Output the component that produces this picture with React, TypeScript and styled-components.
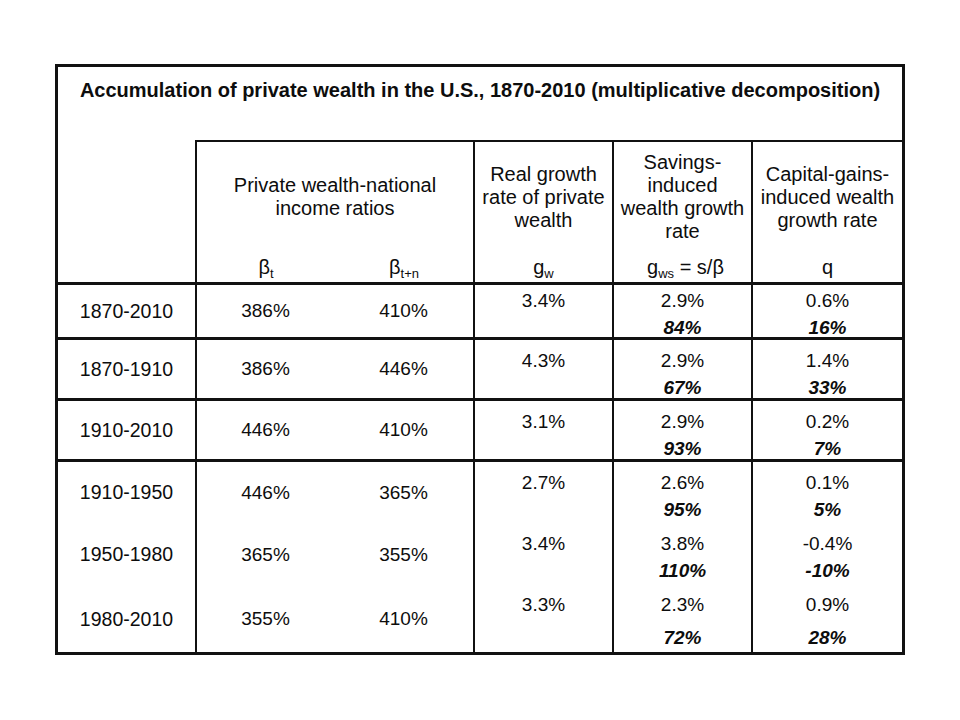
import React from "react";
import styled, { createGlobalStyle } from "styled-components";

const Global = createGlobalStyle`
  html, body { margin: 0; padding: 0; background: #ffffff; }
  body { font-family: "Liberation Sans", Arial, sans-serif; color: #0d0d0d; }
`;

const Page = styled.div`
  width: 960px;
  height: 720px;
  padding: 64px 0 0 55px;
  box-sizing: border-box;
`;

const Frame = styled.div`
  width: 850px;
  height: 591px;
  box-sizing: border-box;
  border: 3px solid #111;
  display: grid;
  grid-template-columns: 137px 139px 139px 139px 139px 151px;
  grid-template-rows: 73px 142px 55px 61px 61px 64px 63px 66px;
`;

const Title = styled.div`
  grid-column: 1 / -1;
  text-align: center;
  font-weight: bold;
  font-size: 20px;
  line-height: 24px;
  padding-top: 11px;
  white-space: nowrap;
`;

const Blank = styled.div``;

const HeadCell = styled.div<{ $span?: number }>`
  grid-column: span ${(p) => p.$span ?? 1};
  border-top: 2px solid #111;
  border-left: 2px solid #111;
  display: flex;
  flex-direction: column;
  font-size: 20px;
`;

const HeadText = styled.div`
  flex: 1;
  display: flex;
  align-items: center;
  justify-content: center;
  text-align: center;
  line-height: 23px;
  padding: 0 2px;
  white-space: nowrap;
`;

const SymRow = styled.div`
  height: 30px;
  display: flex;
  align-items: center;
  font-size: 20px;
`;

const Sym = styled.span<{ $shift?: number }>`
  flex: 1;
  text-align: center;
  white-space: nowrap;
  padding-left: ${(p) => p.$shift ?? 0}px;
`;

const Sub = styled.sub`
  font-size: 13px;
  vertical-align: -4px;
  line-height: 0;
`;

const Label = styled.div<{ $sep?: number }>`
  border-top: ${(p) => (p.$sep ? `${p.$sep}px solid #111` : "none")};
  display: flex;
  align-items: center;
  justify-content: center;
  font-size: 19.5px;
`;

const Ratio = styled.div<{ $sep?: number; $first?: boolean }>`
  border-top: ${(p) => (p.$sep ? `${p.$sep}px solid #111` : "none")};
  border-left: ${(p) => (p.$first ? "2px solid #111" : "none")};
  display: flex;
  align-items: center;
  justify-content: center;
  font-size: 19px;
`;

const Rate = styled.div<{ $sep?: number; $pad: number }>`
  border-top: ${(p) => (p.$sep ? `${p.$sep}px solid #111` : "none")};
  border-left: 2px solid #111;
  display: flex;
  flex-direction: column;
  align-items: center;
  padding-top: ${(p) => p.$pad}px;
  font-size: 19px;
  line-height: 27px;
`;

const Share = styled.div<{ $gap?: number }>`
  font-weight: bold;
  font-style: italic;
  margin-top: ${(p) => p.$gap ?? 0}px;
`;

type Row = {
  label: string;
  bt: string;
  btn: string;
  gw: string;
  gws: string;
  shareS: string;
  q: string;
  shareQ: string;
  sep: number;
  pad: number;
  gap?: number;
};

const rows: Row[] = [
  { label: "1870-2010", bt: "386%", btn: "410%", gw: "3.4%", gws: "2.9%", shareS: "84%", q: "0.6%", shareQ: "16%", sep: 3, pad: 2 },
  { label: "1870-1910", bt: "386%", btn: "446%", gw: "4.3%", gws: "2.9%", shareS: "67%", q: "1.4%", shareQ: "33%", sep: 3, pad: 6.5 },
  { label: "1910-2010", bt: "446%", btn: "410%", gw: "3.1%", gws: "2.9%", shareS: "93%", q: "0.2%", shareQ: "7%", sep: 3, pad: 6.5 },
  { label: "1910-1950", bt: "446%", btn: "365%", gw: "2.7%", gws: "2.6%", shareS: "95%", q: "0.1%", shareQ: "5%", sep: 3, pad: 6.5 },
  { label: "1950-1980", bt: "365%", btn: "355%", gw: "3.4%", gws: "3.8%", shareS: "110%", q: "-0.4%", shareQ: "-10%", sep: 0, pad: 6.5 },
  { label: "1980-2010", bt: "355%", btn: "410%", gw: "3.3%", gws: "2.3%", shareS: "72%", q: "0.9%", shareQ: "28%", sep: 0, pad: 4.5, gap: 6 },
];

export default function App() {
  return (
    <>
      <Global />
      <Page>
        <Frame>
          <Title>
            Accumulation of private wealth in the U.S., 1870-2010 (multiplicative decomposition)
          </Title>
          <Blank />
          <HeadCell $span={2}>
            <HeadText>
              Private wealth-national
              <br />
              income ratios
            </HeadText>
            <SymRow>
              <Sym>
                β<Sub>t</Sub>
              </Sym>
              <Sym>
                β<Sub>t+n</Sub>
              </Sym>
            </SymRow>
          </HeadCell>
          <HeadCell>
            <HeadText>
              Real growth
              <br />
              rate of private
              <br />
              wealth
            </HeadText>
            <SymRow>
              <Sym>
                g<Sub>w</Sub>
              </Sym>
            </SymRow>
          </HeadCell>
          <HeadCell>
            <HeadText>
              Savings-
              <br />
              induced
              <br />
              wealth growth
              <br />
              rate
            </HeadText>
            <SymRow>
              <Sym $shift={6}>
                g<Sub>ws</Sub> = s/β
              </Sym>
            </SymRow>
          </HeadCell>
          <HeadCell>
            <HeadText>
              Capital-gains-
              <br />
              induced wealth
              <br />
              growth rate
            </HeadText>
            <SymRow>
              <Sym>q</Sym>
            </SymRow>
          </HeadCell>
          {rows.map((r) => (
            <React.Fragment key={r.label}>
              <Label $sep={r.sep}>{r.label}</Label>
              <Ratio $sep={r.sep} $first>
                {r.bt}
              </Ratio>
              <Ratio $sep={r.sep}>{r.btn}</Ratio>
              <Rate $sep={r.sep} $pad={r.pad}>
                <div>{r.gw}</div>
              </Rate>
              <Rate $sep={r.sep} $pad={r.pad}>
                <div>{r.gws}</div>
                <Share $gap={r.gap}>{r.shareS}</Share>
              </Rate>
              <Rate $sep={r.sep} $pad={r.pad}>
                <div>{r.q}</div>
                <Share $gap={r.gap}>{r.shareQ}</Share>
              </Rate>
            </React.Fragment>
          ))}
        </Frame>
      </Page>
    </>
  );
}
